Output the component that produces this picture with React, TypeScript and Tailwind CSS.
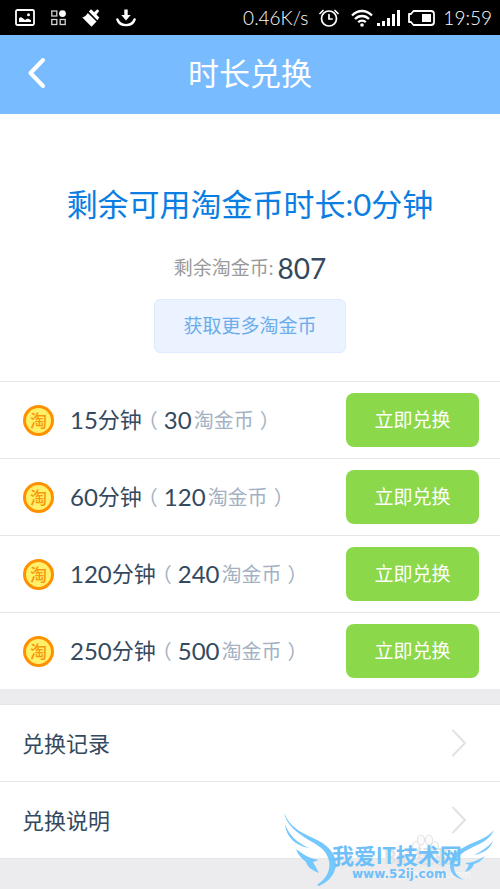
import React from "react";

const plans = [
  { minutes: "15", coins: "30" },
  { minutes: "60", coins: "120" },
  { minutes: "120", coins: "240" },
  { minutes: "250", coins: "500" },
];

const links = ["兑换记录", "兑换说明"];

function StatusBar() {
  return (
    <div className="flex h-[35px] items-center justify-between bg-black pl-[15px] pr-2 text-white">
      <div className="flex items-center gap-4">
        <svg width="20" height="17" viewBox="0 0 20 17" fill="none">
          <rect x="1" y="1" width="18" height="15" rx="1.5" stroke="#fff" strokeWidth="1.8" />
          <path d="M4 13V9.500c1-1.500 2.500-1.500 3.500-0.500L10 11l2.500-1.500L16 11v2z" fill="#fff" />
          <circle cx="13.500" cy="5.800" r="1.500" fill="#fff" />
        </svg>
        <svg width="15" height="16" viewBox="0 0 15 16" fill="none" stroke="#d4d4d4" strokeWidth="1.300">
          <rect x="0.800" y="1" width="5" height="5" />
          <rect x="0.800" y="9.500" width="5" height="5" />
          <rect x="9.200" y="9.500" width="5" height="5" />
          <circle cx="11.500" cy="3.600" r="3.400" fill="#fff" stroke="none" />
        </svg>
        <svg width="18" height="18" viewBox="0 0 18 18" fill="#fff">
          <path d="M0.300 8.500C3 7.500 4.500 6 5.800 4L14.500 12.500 9.500 17.700z" />
          <path d="m6.800 2.500 2.300-2.200 3 3L15.300 0.300l2 1.800-2.900 3.300 2.900 3-2 2.900z" />
        </svg>
        <svg width="20" height="18" viewBox="0 0 20 18" fill="none">
          <path d="M8.300 0.500h3.400V6h3L10 11.500 5.300 6h3z" fill="#fff" />
          <path d="M1.400 10.500C4 18 16 18 18.600 10.500" stroke="#fff" strokeWidth="2.400" strokeLinecap="round" />
        </svg>
      </div>
      <div className="flex items-center">
        <span className="text-[19px] leading-6 font-light">0.46K/s</span>
        <svg className="ml-[11px]" width="20" height="18" viewBox="0 0 20 18" fill="none" stroke="#fff" strokeWidth="1.700" strokeLinecap="round">
          <circle cx="10" cy="9.500" r="7.500" />
          <path d="M10 5.500v4.500h3M1 4.500 4 1.500M19 4.500 16 1.500" />
        </svg>
        <svg className="ml-3" width="22" height="18" viewBox="0 0 22 18" fill="none" stroke="#fff" strokeWidth="2.300">
          <path d="M1 6.500C7 0.500 15 0.500 21 6.500M4 10c4-4 10-4 14 0M7.200 13.200c2.200-2 5.400-2 7.600 0" />
          <circle cx="11" cy="16" r="1.800" fill="#fff" stroke="none" />
        </svg>
        <svg className="ml-1" width="24" height="18" viewBox="0 0 24 18" fill="#fff">
          <rect x="0" y="14" width="3" height="3" />
          <rect x="5" y="12" width="3" height="5" />
          <rect x="10" y="9" width="3" height="8" />
          <rect x="15" y="5" width="3" height="12" />
          <rect x="20" y="1" width="3" height="16" />
        </svg>
        <svg className="ml-[7px]" width="27" height="16" viewBox="0 0 27 16" fill="none">
          <path d="M5.500 1H23a3 3 0 0 1 3 3v8a3 3 0 0 1-3 3H5.500L3 12H1V4h2z" stroke="#fff" strokeWidth="1.800" strokeLinejoin="round" />
          <rect x="14" y="4" width="9" height="8" fill="#fff" />
        </svg>
        <span className="ml-2 text-[19px] leading-6 font-light">19:59</span>
      </div>
    </div>
  );
}

function Coin() {
  return (
    <span className="flex size-[31px] shrink-0 items-center justify-center rounded-full border-3 border-[#ff9100] bg-[#fff06a] text-[17px] leading-none font-medium text-[#f7990c]">
      淘
    </span>
  );
}

function Watermark() {
  return (
    <div className="pointer-events-none absolute right-0 bottom-0 h-[80px] w-[218px]">
      <svg className="absolute inset-0" width="218" height="80" viewBox="0 0 218 80">
        <g fill="#fbfbfb" stroke="#e4e4e5" strokeWidth="1.200">
          <ellipse cx="134" cy="37" rx="3.500" ry="4.500" />
          <ellipse cx="139" cy="31" rx="3.500" ry="5" />
          <ellipse cx="147" cy="31" rx="3.500" ry="5" />
          <ellipse cx="153" cy="37" rx="3.500" ry="4.500" />
        </g>
      </svg>
      <span className="absolute top-[36px] left-[102px] text-[19px] leading-6 font-bold whitespace-nowrap text-[#e2e2e4]">Bai 经验</span>
      <span className="absolute top-[57px] left-[102px] text-[11px] leading-4 whitespace-nowrap text-[#f7f7f8]">jingyan.baidu.com</span>
      <svg className="absolute inset-0" width="218" height="80" viewBox="0 0 218 80">
        <g fill="#74c8fd">
          <path d="M2 4C8 18 18 23 31 29c14 6 23 15 23 27-1 10-8 17-17 21l-2-1c9-6 14-15 12-24C44 38 32 35 22 28 11 21 4 13 2 4z" />
          <path d="M3 15c4 11 11 18 24 24C14 37 4 28 3 15z" />
          <path d="M14 40c7 5 12 9 23 11l-6 2 6 11C29 61 25 57 24 53c-4-3-8-7-10-13z" />
          <path d="M212 21c-4 9-12 13-21 17-10 5-19 10-19 20 0 6 4 10 10 13-9-2-14-7-14-14 0-11 8-16 18-21 9-4 19-7 26-15z" />
          <path d="M211 32c-3 8-9 12-19 14 8-4 14-8 19-14z" />
          <path d="M203 47c-4 5-7 7-11 8-2 5-5 7-9 8l4-7-4-2c8 0 13-3 20-7z" />
        </g>
      </svg>
      <span className="absolute top-[34px] left-[50px] text-[22px] leading-[26px] font-bold whitespace-nowrap text-[#6fc0f9]">我爱IT技术网</span>
      <span className="absolute top-[57px] left-[70px] font-['DejaVu_Sans',sans-serif] text-[12px] leading-4 font-bold text-[#6fc0f9]">www.52ij.com</span>
    </div>
  );
}

export default function App() {
  return (
    <div className="relative flex min-h-screen flex-col bg-[#ececee] font-[Lato,'Noto_Sans_CJK_SC',sans-serif] text-[#34495e]">
      <StatusBar />
      <header className="grid h-[79px] grid-cols-[1fr_auto_1fr] items-center bg-[#78bbff] pb-[3px] text-white">
        <button type="button" aria-label="返回" className="ml-[27px] w-5">
          <svg width="20" height="32" viewBox="0 0 20 32" fill="none" stroke="#fff" strokeWidth="4" strokeLinecap="round" strokeLinejoin="round">
            <path d="M16 3 3.500 16 16 29" />
          </svg>
        </button>
        <h1 className="text-[31px] leading-10">时长兑换</h1>
      </header>

      <main>
        <section className="flex flex-col items-center bg-white pt-[68px] pb-7">
          <h2 className="text-[31px] leading-[44px] text-[#0a7ee2]">剩余可用淘金币时长:0分钟</h2>
          <p className="mt-[26px] flex items-center leading-8">
            <span className="text-[19px] text-[#999]">剩余淘金币:</span>
            <span className="ml-1 text-[28px]">807</span>
          </p>
          <button type="button" className="mt-[15px] h-[54px] w-48 rounded-md border border-[#dcebfd] bg-[#eaf3ff] text-[19px] text-[#6cacec]">
            获取更多淘金币
          </button>
        </section>

        <ul className="bg-white">
          {plans.map((plan) => (
            <li key={plan.minutes} className="flex h-[77px] items-center border-t border-[#e6e6e8] pr-[21px] pl-[23px]">
              <Coin />
              <p className="ml-4 flex flex-1 items-center leading-8 whitespace-nowrap">
                <span className="text-[24px]">{plan.minutes}</span>
                <span className="text-[22px]">分钟</span>
                <span className="px-[6px] text-[20px] text-[#a3b1c2] [font-feature-settings:'halt']">（</span>
                <span className="text-[24px]">{plan.coins}</span>
                <span className="ml-[2px] text-[20px] text-[#a3b1c2]">淘金币</span>
                <span className="px-[6px] text-[20px] text-[#a3b1c2] [font-feature-settings:'halt']">）</span>
              </p>
              <button type="button" className="h-[54px] w-[133px] rounded-lg bg-[#8cd84b] text-[19px] text-white">
                立即兑换
              </button>
            </li>
          ))}
        </ul>

        <nav className="mt-[15px] border-b border-[#e6e6e8] bg-white">
          {links.map((label) => (
            <a key={label} href="#" className="flex h-[77px] items-center justify-between border-t border-[#e6e6e8] pr-[33px] pl-[22px] text-[22px]">
              {label}
              <svg width="16" height="28" viewBox="0 0 16 28" fill="none" stroke="#e2e2e2" strokeWidth="2" strokeLinecap="round">
                <path d="m2 1.500 12 12.500L2 26.500" />
              </svg>
            </a>
          ))}
        </nav>
      </main>
      <Watermark />
    </div>
  );
}
